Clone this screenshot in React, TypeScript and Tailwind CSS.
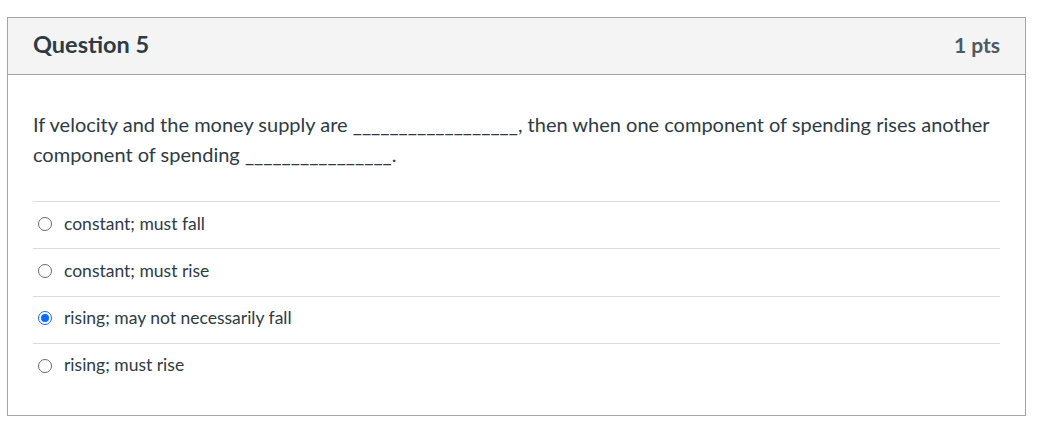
import React from 'react'

const answers = [
  { text: 'constant; must fall', checked: false },
  { text: 'constant; must rise', checked: false },
  { text: 'rising; may not necessarily fall', checked: true },
  { text: 'rising; must rise', checked: false },
]

function Radio({ checked }: { checked: boolean }) {
  return (
    <span
      className={`flex h-[14px] w-[14px] shrink-0 items-center justify-center rounded-full border ${
        checked ? 'border-[#0a6cf5] border-[1.5px]' : 'border-[#6b6b6b]'
      } bg-white`}
    >
      {checked && <span className="h-[8px] w-[8px] rounded-full bg-[#0a6cf5]" />}
    </span>
  )
}

export default function App() {
  return (
    <div className="min-h-screen bg-white pl-[7px] pt-[17px] font-['Lato','Liberation_Sans',sans-serif] text-[#2d3b45]">
      <div className="w-[1019px] border border-[#a5a5a5]">
        <div className="flex h-[57px] items-center justify-between border-b border-[#a5a5a5] bg-[#f4f4f4] px-[25px] pb-[2px]">
          <h2 className="text-[23.5px] font-bold">Question 5</h2>
          <span className="text-[21px] font-bold text-[#4e5a63]">1 pts</span>
        </div>

        <div className="px-[25px] pt-[34px] pb-[25px]">
          <p className="text-[20px] leading-[30px]">
            If velocity and the money supply are __________________, then when one component of spending rises another
            component of spending ________________.
          </p>

          <div className="mt-[32px]">
            {answers.map(a => (
              <label
                key={a.text}
                className="flex h-[47.3px] items-center gap-[12px] border-t border-[#dcdcdc] pb-[3px] pl-[5px] text-[17.5px]"
              >
                <Radio checked={a.checked} />
                <span>{a.text}</span>
              </label>
            ))}
          </div>
        </div>
      </div>
    </div>
  )
}
